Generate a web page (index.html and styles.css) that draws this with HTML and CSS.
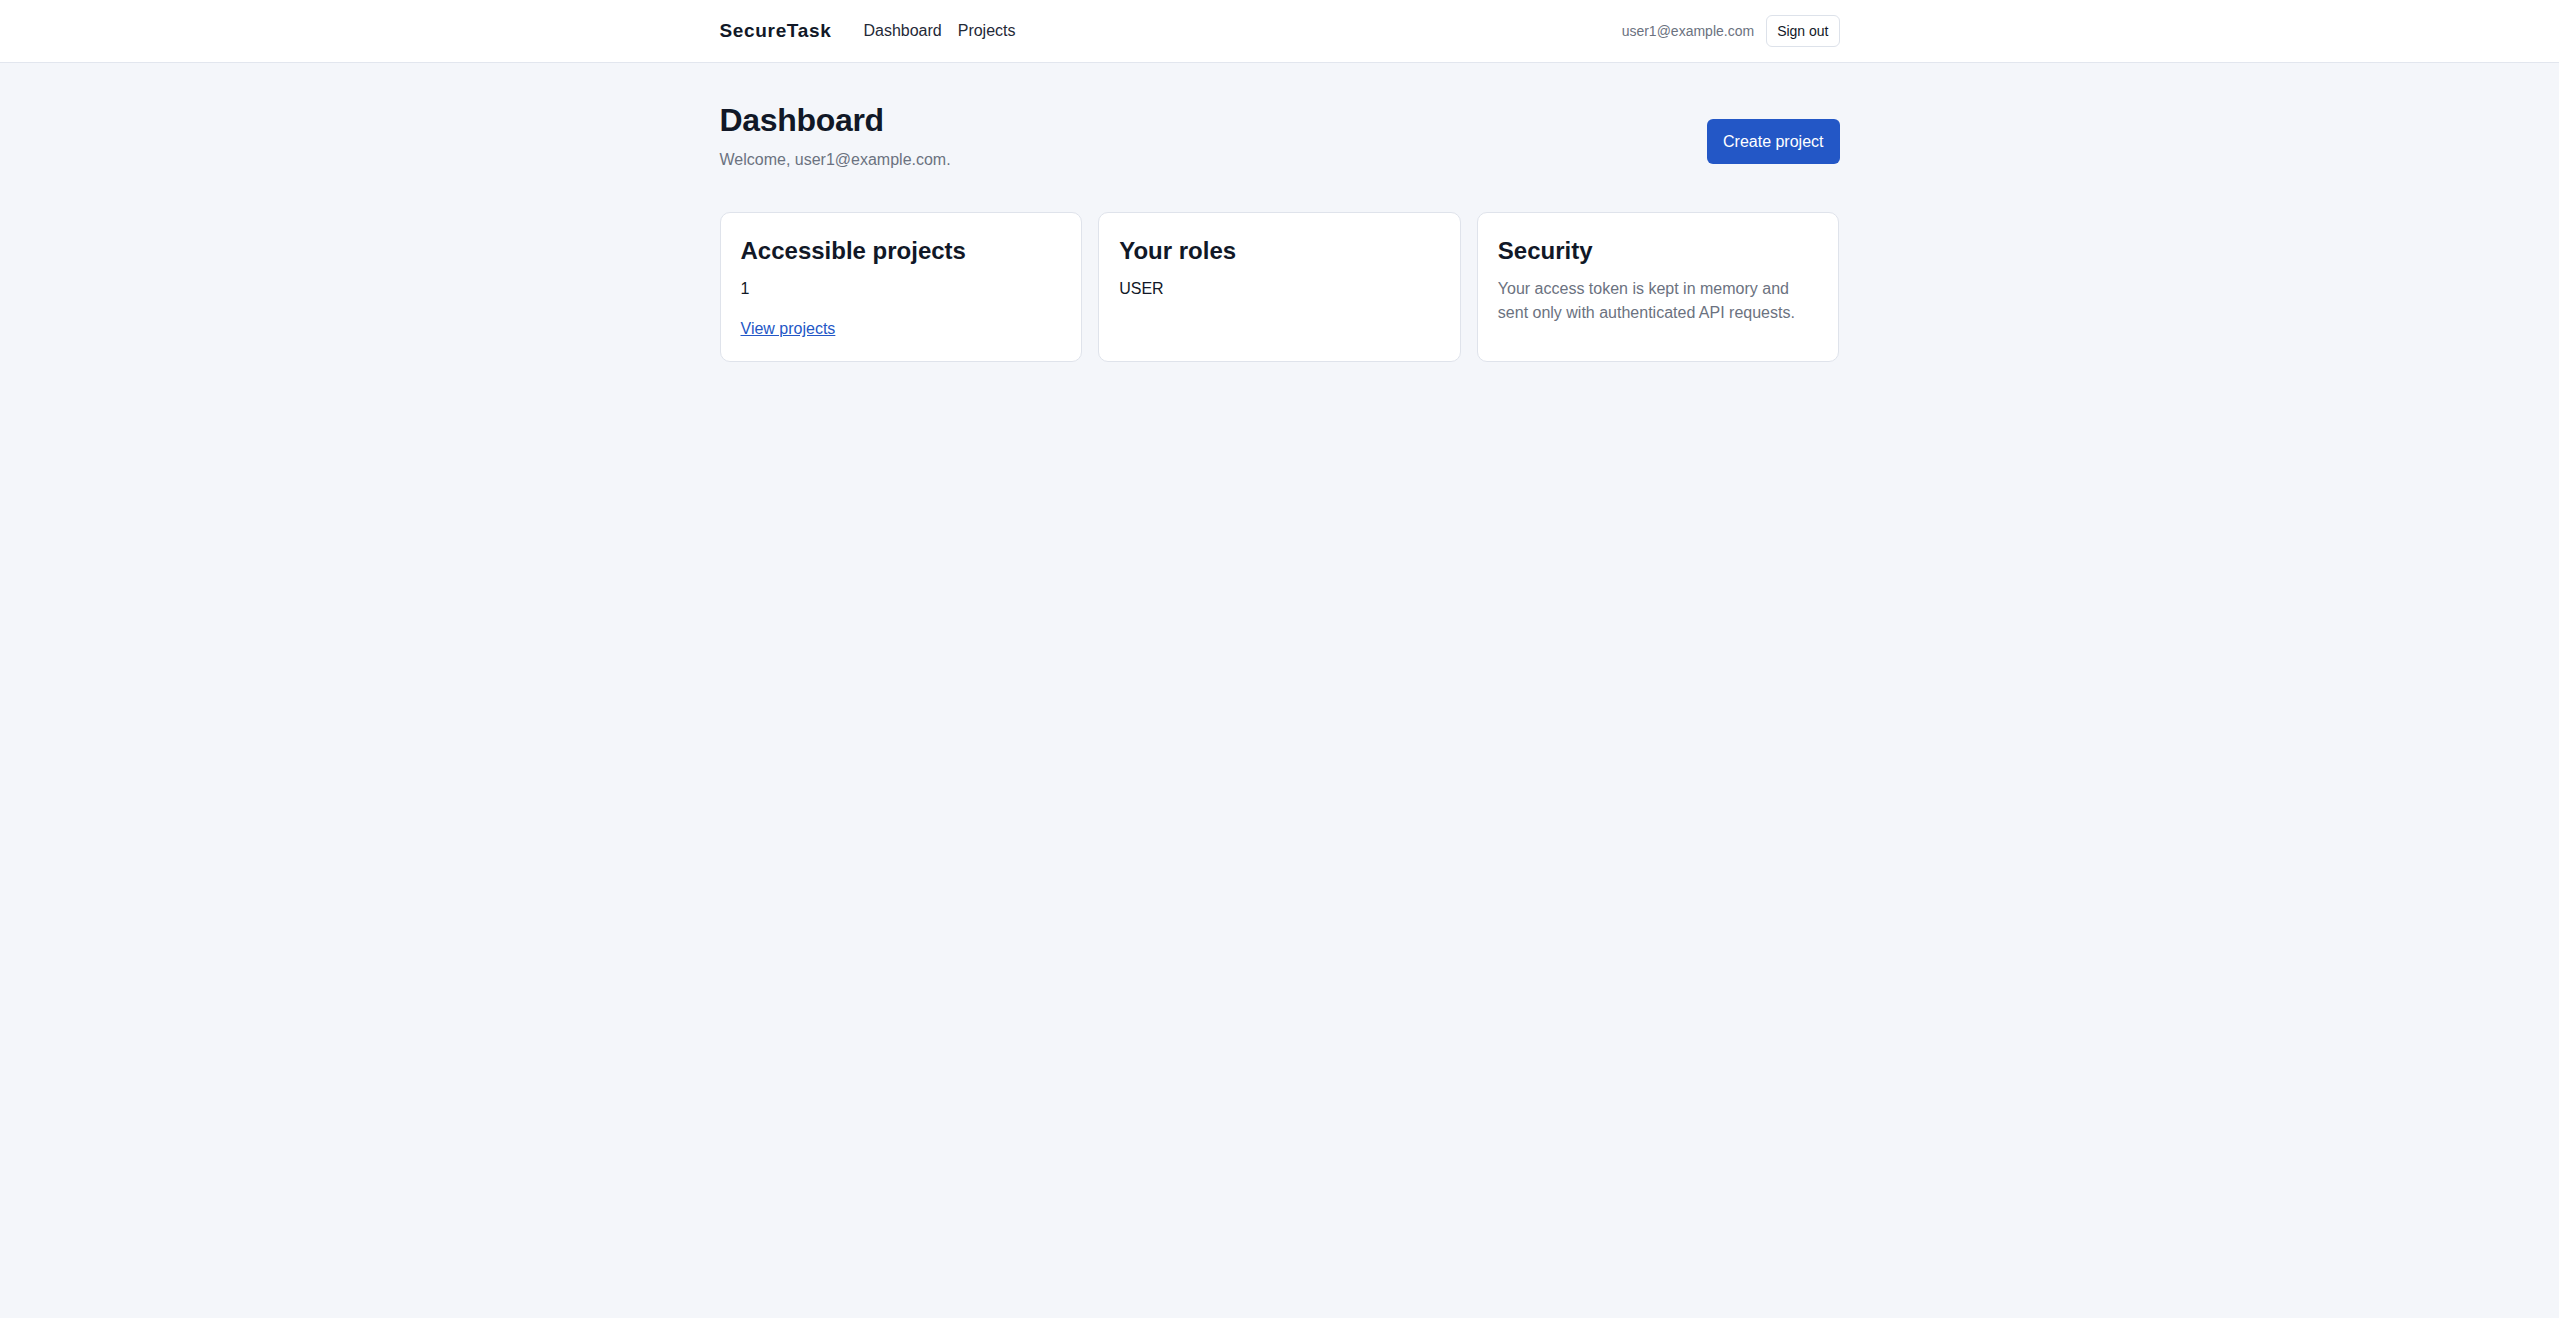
FILE: index.html
```html
<!DOCTYPE html>
<html lang="en">
  <head>
    <meta charset="UTF-8" />
    <meta name="viewport" content="width=device-width, initial-scale=1.0" />
    <title>SecureTask</title>
    <link rel="stylesheet" href="styles.css">
  </head>
  <body>
    <header class="topbar">
      <div class="wrap topbar-inner">
        <div class="topbar-left">
          <a class="brand" href="#">SecureTask</a>
          <nav class="mainnav">
            <a href="#">Dashboard</a>
            <a href="#">Projects</a>
          </nav>
        </div>
        <div class="topbar-right">
          <span class="who">user1@example.com</span>
          <button class="btn-ghost">Sign out</button>
        </div>
      </div>
    </header>

    <main class="wrap page">
      <div class="page-head">
        <div>
          <h1>Dashboard</h1>
          <p class="muted welcome">Welcome, user1@example.com.</p>
        </div>
        <button class="btn-primary">Create project</button>
      </div>

      <section class="cards">
        <article class="card">
          <h2>Accessible projects</h2>
          <p>1</p>
          <p class="card-link"><a class="link" href="#">View projects</a></p>
        </article>
        <article class="card">
          <h2>Your roles</h2>
          <p>USER</p>
        </article>
        <article class="card">
          <h2>Security</h2>
          <p class="muted">Your access token is kept in memory and sent only with authenticated API requests.</p>
        </article>
      </section>
    </main>
  </body>
</html>
```

FILE: styles.css
```css
body {
  margin: 0;
  background-color: #f4f6fa;
  color: #111827;
  font-family: "Liberation Sans", Arial, sans-serif;
  font-size: 16px;
}

.wrap {
  width: 1120px;
  margin: 0 auto;
}

/* top bar */
.topbar {
  background-color: #ffffff;
  border-bottom: 1px solid #e2e6ee;
}

.topbar-inner {
  height: 62px;
  display: flex;
  justify-content: space-between;
  align-items: center;
}

.topbar-left {
  display: flex;
  align-items: center;
  gap: 32px;
}

.brand {
  font-size: 19px;
  font-weight: bold;
  letter-spacing: 0.035em;
  color: #111827;
  text-decoration: none;
}

.mainnav {
  display: flex;
  gap: 16px;
}

.mainnav a {
  color: #1f2937;
  text-decoration: none;
}

.topbar-right {
  display: flex;
  align-items: center;
  gap: 12px;
}

.who {
  font-size: 14px;
  color: #6b7280;
}

.btn-ghost {
  height: 32px;
  padding: 0 10px;
  background-color: #ffffff;
  border: 1px solid #dde2ea;
  border-radius: 6px;
  font-family: inherit;
  font-size: 14px;
  color: #111827;
}

/* page */
.page {
  padding-top: 38px;
}

.page-head {
  display: flex;
  justify-content: space-between;
  align-items: flex-start;
}

h1 {
  margin: 0;
  font-size: 32px;
  line-height: 1.2;
  letter-spacing: -0.01em;
}

.welcome {
  margin: 10px 0 0;
  line-height: 22px;
}

.muted {
  color: #6b7280;
}

.btn-primary {
  margin-top: 18px;
  padding: 12px 16px;
  line-height: 21px;
  background-color: #2357c6;
  color: #ffffff;
  border: none;
  border-radius: 6px;
  font-family: inherit;
  font-size: 16px;
}

.cards {
  margin-top: 41px;
  display: grid;
  grid-template-columns: repeat(3, 1fr);
  gap: 16px;
}

.card {
  background-color: #ffffff;
  border: 1px solid #dfe3eb;
  border-radius: 10px;
  padding: 24px 20px 20px;
}

.card h2 {
  margin: 0;
  font-size: 24px;
  line-height: 1.2;
}

.card p {
  margin: 11px 0 0;
  line-height: 24px;
}

.card .card-link {
  margin-top: 16px;
}

.link {
  color: #2357c6;
}
```
